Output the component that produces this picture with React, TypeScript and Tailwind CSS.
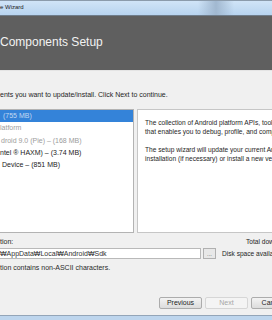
/* SDK Components Setup page of the setup wizard */

interface SdkRow {
  label: string;
  state: "selected" | "disabled" | "normal";
  indent: string;
}

const rows: SdkRow[] = [
  { label: "(755 MB)", state: "selected", indent: "pl-[3px]" },
  { label: "latform", state: "disabled", indent: "pl-0" },
  { label: "droid 9.0 (Pie) – (168 MB)", state: "disabled", indent: "pl-[1px]" },
  { label: "ntel ® HAXM) – (3.74 MB)", state: "normal", indent: "pl-0" },
  { label: "Device – (851 MB)", state: "normal", indent: "pl-[2px]" },
];

const rowTone = {
  selected: "bg-[#3483d9] text-[#c3d9f2]",
  disabled: "text-[#9c9c9c]",
  normal: "text-[#1c1c1c]",
};

const WizardButton: React.FC<{ label: string; disabled?: boolean }> = ({ label, disabled }) => (
  <button
    className={
      disabled
        ? "w-[43px] h-[12px] shrink-0 rounded-[2px] border border-[#d6d6d6] bg-[#f4f4f4] text-[#a6a6a6] leading-[10px]"
        : "w-[43px] h-[12px] shrink-0 rounded-[2px] border border-[#acacac] bg-linear-to-b from-[#f3f3f3] to-[#dcdcdc] text-[#1e1e1e] leading-[10px]"
    }
  >
    {label}
  </button>
);

export default function App() {
  return (
    <div className="w-[272px] h-[320px] overflow-hidden bg-[#f0f0f0] flex flex-col text-[7px] leading-[9px] text-[#1e1e1e] font-['Liberation_Sans','Noto_Sans_CJK_KR',sans-serif]">
      {/* window title bar */}
      <div className="h-[16px] shrink-0 flex border-t border-t-[#8b9bab] border-b border-b-[#6f7d8b] bg-linear-to-b from-[#d0e4f7] to-[#b8d4ef]">
        <span className="w-[198px] shrink-0 text-[6px] leading-[12px] text-[#1b1b1b] whitespace-nowrap">e Wizard</span>
        <div className="w-[36px] shrink-0 bg-linear-to-r from-transparent via-[#a1b8d0] to-transparent" />
      </div>

      {/* dark header */}
      <div className="h-[55px] shrink-0 bg-[#5f5f5f] border-b border-[#e4e4e4] pt-[20px]">
        <h1 className="text-[12px] leading-[12px] text-[#f2f2f2] whitespace-nowrap">Components Setup</h1>
      </div>

      <p className="mt-[19px] whitespace-nowrap">ents you want to update/install. Click Next to continue.</p>

      <div className="mt-[10px] grid grid-cols-[134px_160px] gap-x-[3px] h-[124px] shrink-0">
        <ul className="border border-l-0 border-[#b3b3b3] bg-white">
          {rows.map((row) => (
            <li
              key={row.label}
              className={`h-[12.25px] leading-[12.25px] whitespace-nowrap ${row.indent} ${rowTone[row.state]}`}
            >
              {row.label}
            </li>
          ))}
        </ul>
        <div className="border border-r-0 border-[#c6c6c6] bg-white pl-[7px] pt-[8px] whitespace-nowrap text-[6.6px] text-[#262626]">
          <p>The collection of Android platform APIs, tools and utilities</p>
          <p>that enables you to debug, profile, and compile your apps.</p>
          <p className="mt-[9px]">The setup wizard will update your current Android SDK</p>
          <p>installation (if necessary) or install a new version.</p>
        </div>
      </div>

      <div className="mt-[4px] flex whitespace-nowrap">
        <span className="w-[246px] shrink-0">tion:</span>
        <span className="text-[6.6px]">Total download size: 1.74 GB</span>
      </div>

      <div className="mt-[2px] h-[11px] flex items-stretch whitespace-nowrap shrink-0">
        <div className="w-[201px] shrink-0 border border-l-0 border-[#b9b9b9] bg-white flex items-center text-[#303030]">
          ₩AppData₩Local₩Android₩Sdk
        </div>
        <button className="ml-[2px] w-[13px] shrink-0 border border-[#b0b0b0] bg-[#e8e8e8] text-[#555] leading-[8px] text-[6px]">
          ...
        </button>
        <span className="ml-[6px] self-center text-[6.6px]">Disk space available on drive : 12.3 GB</span>
      </div>

      <p className="mt-[4px] whitespace-nowrap text-[#2a2a2a]">tion contains non-ASCII characters.</p>

      <div className="mt-[25px] flex gap-[3px] pl-[159px]">
        <WizardButton label="Previous" />
        <WizardButton label="Next" disabled />
        <WizardButton label="Cancel" />
      </div>

      {/* window frame bottom */}
      <div className="mt-auto h-[5px] shrink-0 border-t border-[#93a5b8] bg-[#bdd5ed]" />
    </div>
  );
}
